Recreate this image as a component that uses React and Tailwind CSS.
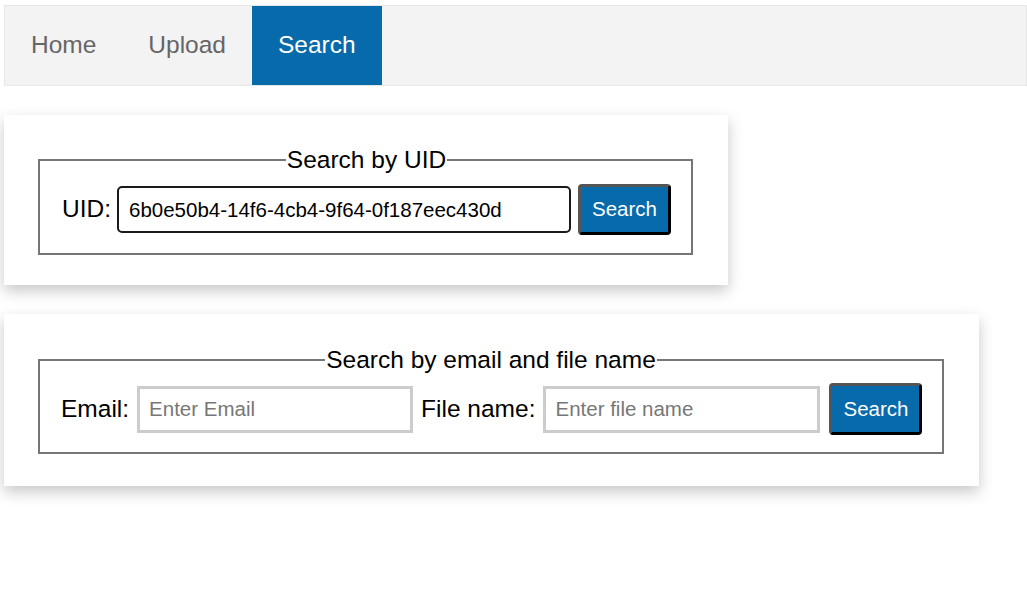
export default function App() {
  return (
    <div className="min-h-screen bg-white pt-[5px] pl-[4px] font-['Liberation_Sans',Arial,sans-serif] text-black">
      {/* Nav bar */}
      <nav className="flex h-[81px] border border-[#e7e7e7] bg-[#f3f3f3]">
        <a className="flex items-center px-[26px] text-[24.5px] text-[#666]">Home</a>
        <a className="flex items-center px-[26px] text-[24.5px] text-[#666]">Upload</a>
        <a className="flex items-center bg-[#066aab] px-[26px] text-[24.5px] text-white">Search</a>
      </nav>

      {/* Search by UID */}
      <div className="mt-[29px] w-[724px] bg-white px-[34px] pt-[32px] pb-[30px] shadow-[0_6px_14px_rgba(0,0,0,0.22)]">
        <fieldset className="w-[655px] min-w-0 border-2 border-[#767676] pl-[22px] pr-[20px] pt-[11px] pb-[18px]">
          <legend className="mx-auto px-[1px] text-[24.5px] leading-[26px]">Search by UID</legend>
          <div className="flex items-center whitespace-nowrap text-[24.5px]">
            <label className="mr-[6px] shrink-0">UID:</label>
            <input
              type="text"
              defaultValue="6b0e50b4-14f6-4cb4-9f64-0f187eec430d"
              className="h-[47px] w-[454px] shrink-0 rounded-[5px] border-2 border-[#1a1a1a] px-[10px] text-[20.5px] outline-none"
            />
            <button className="ml-[7px] h-[51px] w-[93px] shrink-0 rounded-[4px] border-[3px] border-[#555] border-r-black border-b-black bg-[#066aab] text-[20.5px] text-white">
              Search
            </button>
          </div>
        </fieldset>
      </div>

      {/* Search by email and file name */}
      <div className="mt-[29px] w-[975px] bg-white px-[34px] pt-[33px] pb-[32px] shadow-[0_6px_14px_rgba(0,0,0,0.22)]">
        <fieldset className="w-[906px] min-w-0 border-2 border-[#767676] px-[21px] pt-[10px] pb-[17px]">
          <legend className="mx-auto px-[1px] text-[24.5px] leading-[26px]">Search by email and file name</legend>
          <div className="flex items-center whitespace-nowrap text-[24.5px]">
            <label className="mr-[8px] shrink-0">Email:</label>
            <input
              type="text"
              placeholder="Enter Email"
              className="h-[47px] w-[276px] shrink-0 border-[3px] border-[#ccc] px-[9px] text-[20.5px] outline-none placeholder:text-[#777]"
            />
            <label className="ml-[8px] mr-[8px] shrink-0">File name:</label>
            <input
              type="text"
              placeholder="Enter file name"
              className="h-[47px] w-[277px] shrink-0 border-[3px] border-[#ccc] px-[9px] text-[20.5px] outline-none placeholder:text-[#777]"
            />
            <button className="ml-[9px] h-[52px] w-[93px] shrink-0 rounded-[4px] border-[3px] border-[#555] border-r-black border-b-black bg-[#066aab] text-[20.5px] text-white">
              Search
            </button>
          </div>
        </fieldset>
      </div>
    </div>
  );
}
